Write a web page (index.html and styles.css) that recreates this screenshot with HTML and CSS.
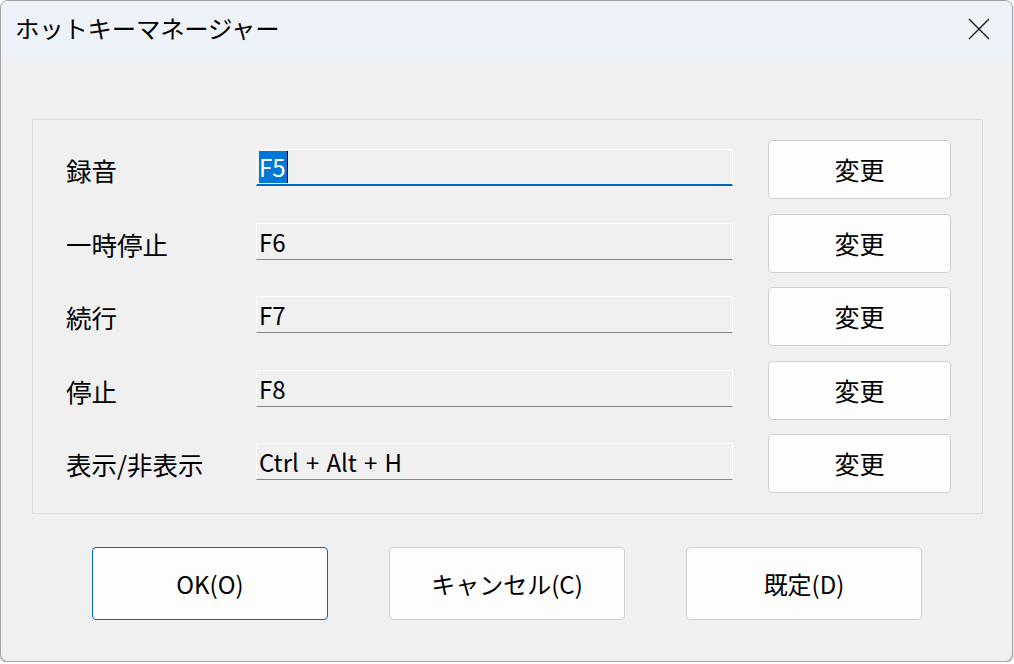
FILE: index.html
```html
<!DOCTYPE html>
<html lang="ja">
<head>
<meta charset="utf-8">
<title>ホットキーマネージャー</title>
<link rel="stylesheet" href="styles.css">
</head>
<body>
<div class="window">
  <div class="titlebar">
    <span class="title">ホットキーマネージャー</span>
    <svg class="close" width="22" height="22" viewBox="0 0 22 22"><path d="M1 1 L21 21 M21 1 L1 21" stroke="#1a1a1a" stroke-width="1.4" fill="none"/></svg>
  </div>
  <div class="content">
    <div class="group">
      <div class="row">
        <span class="label">録音</span>
        <div class="field focused"><span class="sel">F5</span><span class="caret"></span></div>
        <button class="btn change">変更</button>
      </div>
      <div class="row">
        <span class="label">一時停止</span>
        <div class="field">F6</div>
        <button class="btn change">変更</button>
      </div>
      <div class="row">
        <span class="label">続行</span>
        <div class="field">F7</div>
        <button class="btn change">変更</button>
      </div>
      <div class="row">
        <span class="label">停止</span>
        <div class="field">F8</div>
        <button class="btn change">変更</button>
      </div>
      <div class="row">
        <span class="label">表示/非表示</span>
        <div class="field">Ctrl + Alt + H</div>
        <button class="btn change">変更</button>
      </div>
    </div>
    <div class="actions">
      <button class="btn action default">OK(O)</button>
      <button class="btn action">キャンセル(C)</button>
      <button class="btn action">既定(D)</button>
    </div>
  </div>
</div>
</body>
</html>
```

FILE: styles.css
```css
* { box-sizing: border-box; }
html, body {
  margin: 0;
  padding: 0;
  background: #ffffff;
}
body {
  font-family: "Noto Sans CJK JP", "Noto Sans", sans-serif;
  color: #000;
}
.window {
  width: 1013px;
  height: 662px;
  border: 1px solid #a4a4a4;
  border-radius: 8px;
  overflow: hidden;
  background: #f0f0f0;
  box-shadow: 0 1px 2px rgba(0,0,0,0.35);
  display: flex;
  flex-direction: column;
}
.titlebar {
  height: 56px;
  flex: none;
  background: #eef2f9;
  display: flex;
  align-items: center;
  justify-content: space-between;
  padding-left: 14px;
  padding-right: 22px;
}
.title {
  font-size: 24.4px;
  line-height: 1;
  padding-bottom: 2px;
  letter-spacing: -0.2px;
}
.close { display: block; margin-top: 0; }
.content {
  padding: 62px 0 0 31px;
}
.group {
  width: 951px;
  height: 395px;
  border: 1px solid #dadada;
  padding: 20px 0 20px 33px;
  display: flex;
  flex-direction: column;
  gap: 14.5px;
}
.row {
  display: grid;
  grid-template-columns: 190px 477px 218px;
  height: 59px;
}
.row .btn { margin-left: 35px; width: 183px; }
.label {
  align-self: center;
  font-size: 25.5px;
  line-height: 1;
  padding-top: 1px;
  white-space: nowrap;
}
.field {
  align-self: start;
  margin-top: 9px;
  height: 37px;
  border: 1px solid #ffffff;
  border-bottom: 1px solid #868686;
  background: #f0f0f0;
  font-size: 24px;
  line-height: 35px;
  padding-left: 2px;
  display: flex;
  align-items: center;
  white-space: pre;
  word-spacing: 1.8px;
}
.field.focused {
  border-bottom: 2px solid #0067c0;
  line-height: 32px;
}
.sel {
  background: #0078d7;
  color: #ffffff;
  line-height: 32px;
  padding: 0 1px 0 0;
}
.caret {
  width: 1px;
  height: 32px;
  background: #000;
}
.btn {
  font-family: "Noto Sans CJK JP", "Noto Sans", sans-serif;
  font-size: 25px;
  color: #000;
  background: #fdfdfd;
  border: 1px solid #d0d0d0;
  border-radius: 4px;
  padding: 0;
  height: 59px;
  line-height: 1;
}
.action { font-size: 24px; }
.actions {
  display: flex;
  gap: 61px;
  margin-top: 33px;
  padding-left: 60px;
}
.action {
  width: 236px;
  height: 73px;
}
.action.default {
  border-color: #0067c0;
}
```
